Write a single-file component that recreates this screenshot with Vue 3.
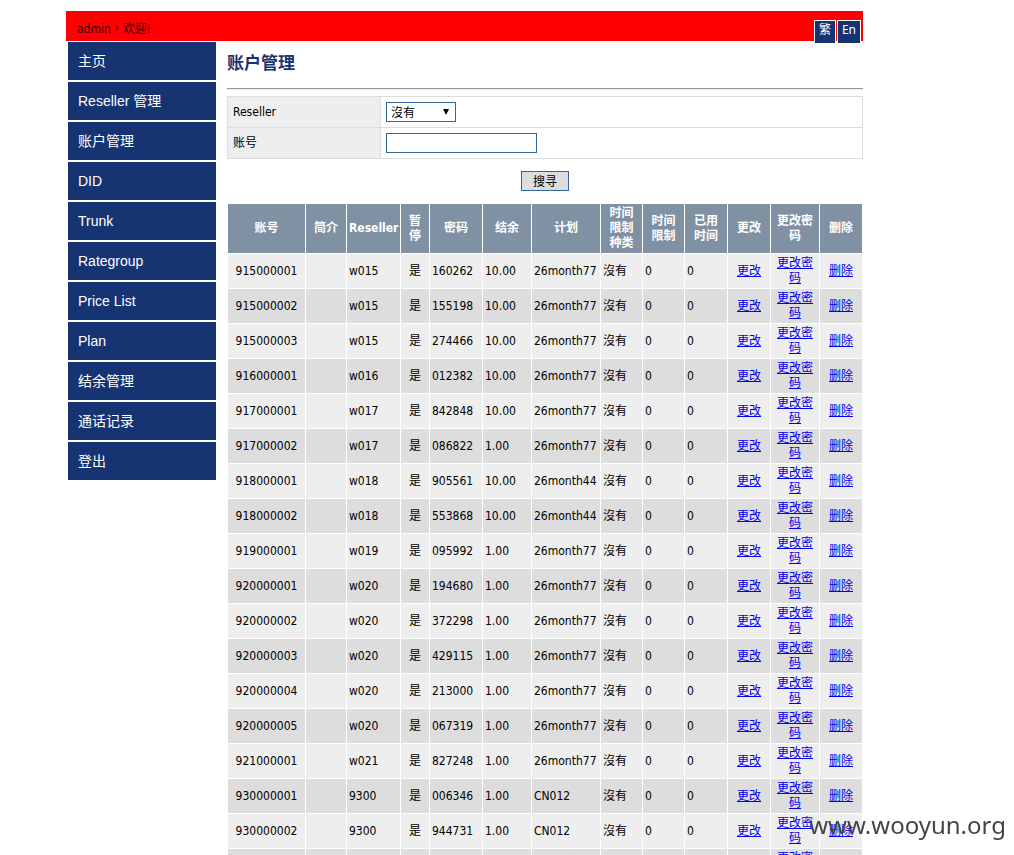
<script setup>
import { ref } from 'vue'

const menu = ['主页', 'Reseller 管理', '账户管理', 'DID', 'Trunk', 'Rategroup', 'Price List', 'Plan', '结余管理', '通话记录', '登出']
const columns = ['账号', '简介', 'Reseller', '暂停', '密码', '结余', '计划', '时间限制种类', '时间限制', '已用时间', '更改', '更改密码', '删除']
const accounts = [
  ['915000001', 'w015', '160262', '10.00', '26month77'],
  ['915000002', 'w015', '155198', '10.00', '26month77'],
  ['915000003', 'w015', '274466', '10.00', '26month77'],
  ['916000001', 'w016', '012382', '10.00', '26month77'],
  ['917000001', 'w017', '842848', '10.00', '26month77'],
  ['917000002', 'w017', '086822', '1.00', '26month77'],
  ['918000001', 'w018', '905561', '10.00', '26month44'],
  ['918000002', 'w018', '553868', '10.00', '26month44'],
  ['919000001', 'w019', '095992', '1.00', '26month77'],
  ['920000001', 'w020', '194680', '1.00', '26month77'],
  ['920000002', 'w020', '372298', '1.00', '26month77'],
  ['920000003', 'w020', '429115', '1.00', '26month77'],
  ['920000004', 'w020', '213000', '1.00', '26month77'],
  ['920000005', 'w020', '067319', '1.00', '26month77'],
  ['921000001', 'w021', '827248', '1.00', '26month77'],
  ['930000001', '9300', '006346', '1.00', 'CN012'],
  ['930000002', '9300', '944731', '1.00', 'CN012']
]
const reseller = ref('none')
const account = ref('')
</script>

<template>
  <div class="page">
    <header class="banner">
      <span class="welcome" lang="zh-TW">admin，欢迎!</span>
      <nav class="langs">
        <a href="#">繁</a>
        <a href="#">En</a>
      </nav>
    </header>
    <div class="body">
      <nav class="menu">
        <a v-for="item in menu" :key="item" href="#">{{ item }}</a>
      </nav>
      <main class="main">
        <h1>账户管理</h1>
        <hr>
        <form @submit.prevent>
          <table class="filter">
            <tbody>
              <tr>
                <th><label for="reseller">Reseller</label></th>
                <td>
                  <div class="picker">
                    <select id="reseller" v-model="reseller">
                      <option value="none">沒有</option>
                    </select>
                    <svg class="arrow" viewBox="0 0 6 6"><path d="M0 0H6L3 6Z" /></svg>
                  </div>
                </td>
              </tr>
              <tr>
                <th><label for="account">账号</label></th>
                <td><input id="account" v-model="account" type="text"></td>
              </tr>
            </tbody>
          </table>
          <div class="actions"><button type="submit">搜寻</button></div>
        </form>
        <table class="list">
          <colgroup>
            <col v-for="n in 13" :key="n" :class="'c' + n">
          </colgroup>
          <thead>
            <tr><th v-for="(c, i) in columns" :key="c" :class="{ narrow: [3, 7, 8, 9].includes(i) }">{{ c }}</th></tr>
          </thead>
          <tbody>
            <tr v-for="a in accounts" :key="a[0]">
              <td class="mid">{{ a[0] }}</td>
              <td></td>
              <td>{{ a[1] }}</td>
              <td class="mid">是</td>
              <td>{{ a[2] }}</td>
              <td>{{ a[3] }}</td>
              <td>{{ a[4] }}</td>
              <td>沒有</td>
              <td>0</td>
              <td>0</td>
              <td class="mid"><a href="#">更改</a></td>
              <td class="mid"><a href="#">更改密码</a></td>
              <td class="mid"><a href="#">删除</a></td>
            </tr>
            <tr>
              <td v-for="n in 11" :key="n"></td>
              <td class="mid"><a href="#">更改密码</a></td>
              <td></td>
            </tr>
          </tbody>
        </table>
      </main>
    </div>
    <div class="watermark">www.wooyun.org</div>
  </div>
</template>

<style>
body {
  margin: 0;
  background: #fff;
}
</style>

<style scoped>
.page {
  box-sizing: border-box;
  height: 100vh;
  overflow: hidden;
  padding: 11px 151px 0 66px;
  font: 12px/15px "DejaVu Sans Condensed", "Noto Sans", "Noto Sans CJK SC", sans-serif;
  color: #000;
}
.banner {
  display: flex;
  justify-content: space-between;
  height: 30px;
  background: #f00;
}
.welcome {
  padding: 11px;
  color: #300;
  font-family: "DejaVu Sans Condensed", "Noto Sans CJK TC", sans-serif;
}
.langs {
  display: flex;
  gap: 1px;
  padding: 9px 2px 0 0;
}
.langs a {
  height: 18px;
  padding: 0 4px 4px;
  border: 1px solid #fff;
  background: #163372;
  color: #fff;
  font: 12px/18px "Noto Sans", "Noto Sans CJK TC", sans-serif;
  text-decoration: none;
}
.body {
  display: flex;
  gap: 11px;
  padding: 1px 0 0 2px;
}
.menu {
  display: flex;
  flex: 0 0 148px;
  flex-direction: column;
  gap: 2px;
}
.menu a {
  padding: 0 10px;
  background: #163372;
  color: #fff;
  font: 14px/38px "Liberation Sans", "Noto Sans CJK SC", sans-serif;
  text-decoration: none;
}
.main {
  flex: 1;
  min-width: 0;
}
h1 {
  margin: 8px 0 14px;
  color: #163372;
  font: bold 17px/24px "Noto Sans CJK SC", sans-serif;
}
hr {
  height: 0;
  margin: 0 0 6px;
  border: 0;
  border-top: 1px solid #999;
  border-bottom: 1px solid #eee;
}
.filter {
  width: 100%;
  border-collapse: collapse;
}
.filter th,
.filter td {
  height: 20px;
  padding: 5px;
  border: 1px solid #ddd;
  text-align: left;
}
.filter th {
  width: 142px;
  background: #eee;
  font-weight: normal;
}
.picker {
  position: relative;
  width: 70px;
}
select,
input,
button {
  display: block;
  box-sizing: border-box;
  height: 20px;
  border: 1px solid #369;
  border-radius: 0;
  background: #fff;
  color: #000;
  font: 12px/18px "Noto Sans CJK SC", sans-serif;
}
select {
  width: 100%;
  padding: 0 4px;
  appearance: none;
}
.arrow {
  position: absolute;
  top: 7px;
  right: 7px;
  width: 6px;
  height: 6px;
  pointer-events: none;
}
input {
  width: 151px;
  padding: 0 4px;
}
.actions {
  display: flex;
  justify-content: center;
  padding: 12px 0;
}
button {
  width: 48px;
  padding: 0;
  background: #ddd;
}
.list {
  width: 100%;
  table-layout: fixed;
  border-spacing: 1px;
}
.c1 { width: 77px; }
.c2 { width: 40px; }
.c3 { width: 53px; }
.c4 { width: 28px; }
.c5 { width: 52px; }
.c6 { width: 48px; }
.c7 { width: 68px; }
.c8, .c9 { width: 41px; }
.c10, .c11, .c13 { width: 42px; }
.c12 { width: 48px; }
.list th,
.list td {
  padding: 2px;
  text-align: left;
}
.list th {
  background: #7f91a3;
  color: #fff;
  text-align: center;
}
.list .narrow {
  padding: 2px 6px;
}
.list td {
  height: 30px;
  background: #eee;
}
.list tr:nth-child(even) td {
  background: #ddd;
}
.list .mid {
  text-align: center;
}
.list a {
  color: #00e;
}
.watermark {
  position: fixed;
  right: 8px;
  bottom: 14px;
  color: #444;
  font: 24px/32px "Noto Sans", sans-serif;
}
</style>
